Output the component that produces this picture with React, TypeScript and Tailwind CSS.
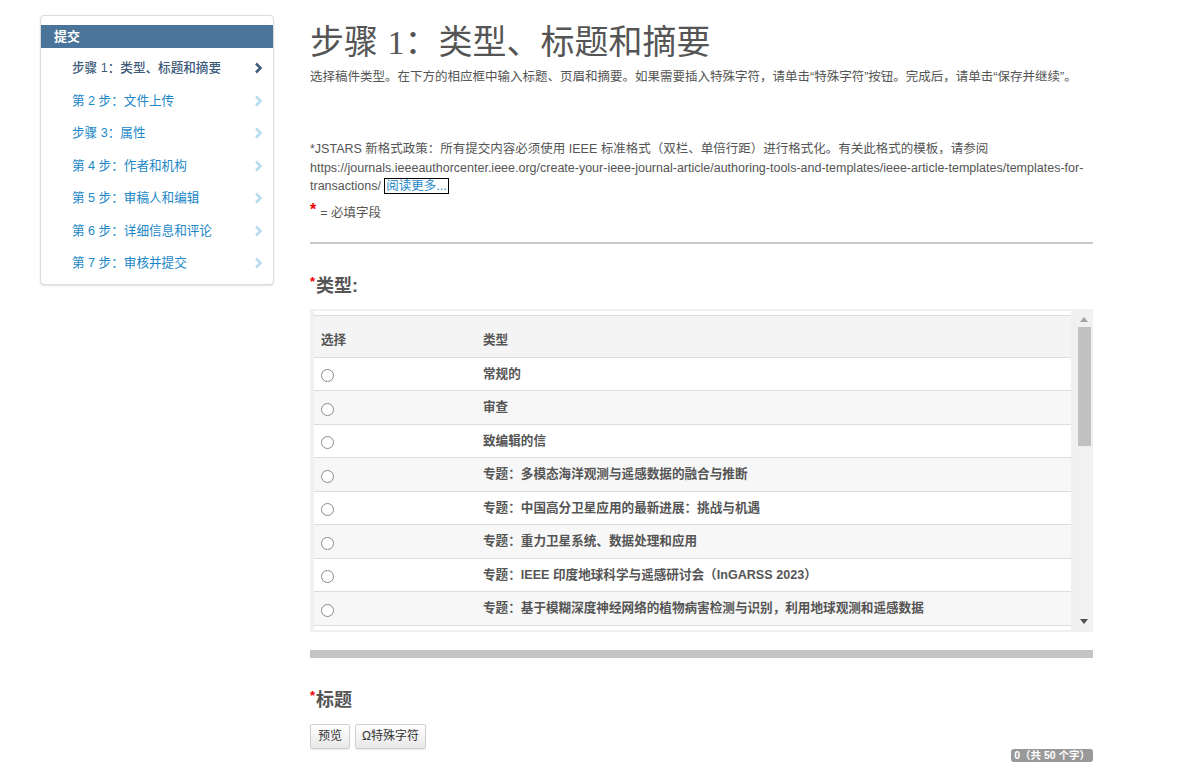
import React from "react";

const steps = [
  "步骤 1：类型、标题和摘要",
  "第 2 步：文件上传",
  "步骤 3：属性",
  "第 4 步：作者和机构",
  "第 5 步：审稿人和编辑",
  "第 6 步：详细信息和评论",
  "第 7 步：审核并提交",
];

const types = [
  "常规的",
  "审查",
  "致编辑的信",
  "专题：多模态海洋观测与遥感数据的融合与推断",
  "专题：中国高分卫星应用的最新进展：挑战与机遇",
  "专题：重力卫星系统、数据处理和应用",
  "专题：IEEE 印度地球科学与遥感研讨会（InGARSS 2023）",
  "专题：基于模糊深度神经网络的植物病害检测与识别，利用地球观测和遥感数据",
];

function Chevron({ active }: { active: boolean }) {
  return (
    <svg width="9" height="12" viewBox="0 0 9 12" className="shrink-0">
      <polyline
        points="2,1.5 6.5,6 2,10.5"
        fill="none"
        stroke={active ? "#3f5d7d" : "#b7dbef"}
        strokeWidth="2.6"
      />
    </svg>
  );
}

export default function App() {
  return (
    <div className="h-[762px] w-[1177px] overflow-hidden bg-white font-['Liberation_Sans','Noto_Sans_CJK_SC',sans-serif] text-[#555]">
      <div className="flex items-start">
        {/* Sidebar */}
        <div className="ml-[40px] mt-[15px] w-[234px] shrink-0 rounded-[4px] border border-[#dcdcdc] bg-white pb-[4px] pt-[9px] shadow-[0_1px_2px_rgba(0,0,0,0.12)]">
          <div className="flex h-[23px] items-center bg-[#4a7499] pl-[13px] text-[13px] font-bold text-white">
            提交
          </div>
          <div className="pt-[4px]">
            {steps.map((s, i) => (
              <div
                key={s}
                className="flex h-[32.5px] items-center justify-between pl-[31px] pr-[10px]"
              >
                <span
                  className={
                    i === 0
                      ? "text-[12.6px] font-medium leading-[18px] text-[#3d5b7b]"
                      : "text-[12.6px] leading-[18px] text-[#1b87c7]"
                  }
                >
                  {s}
                </span>
                <Chevron active={i === 0} />
              </div>
            ))}
          </div>
        </div>

        {/* Main */}
        <div className="ml-[36px] w-[783px] shrink-0 pt-[22px]">
          <h1 className="whitespace-nowrap text-[34px] font-normal leading-[40px] text-[#555]">
            步骤 <span className="font-['Liberation_Serif',serif]">1</span>：类型、标题和摘要
          </h1>
          <p className="mt-[5px] whitespace-nowrap text-[12.5px] leading-[18px]">
            选择稿件类型。在下方的相应框中输入标题、页眉和摘要。如果需要插入特殊字符，请单击“特殊字符”按钮。完成后，请单击“保存并继续”。
          </p>

          <div className="mt-[54px] text-[12.5px] leading-[18.5px]">
            <div className="whitespace-nowrap">
              *JSTARS 新格式政策：所有提交内容必须使用 IEEE 标准格式（双栏、单倍行距）进行格式化。有关此格式的模板，请参阅
            </div>
            <div className="whitespace-nowrap">
              https://journals.ieeeauthorcenter.ieee.org/create-your-ieee-journal-article/authoring-tools-and-templates/ieee-article-templates/templates-for-
            </div>
            <div className="whitespace-nowrap">
              transactions/{" "}
              <span className="border border-black px-[1px] text-[#1b87c7]">阅读更多...</span>
            </div>
          </div>

          <p className="mt-[8px] flex items-center text-[12.5px] leading-[18px]">
            <span className="relative top-[-3px] mr-[4px] text-[16px] font-bold leading-[10px] text-[#e00]">*</span>
            = 必填字段
          </p>

          <div className="mt-[20px] h-[2px] bg-[#c8c8c8]" />

          <h2 className="mt-[30px] flex items-start text-[18px] font-bold leading-[24px]">
            <span className="mr-[1px] text-[13px] leading-[16px] text-[#e00]">*</span>
            类型:
          </h2>

          {/* Table box */}
          <div className="mt-[11px] flex h-[323px] bg-[#f0f0f0] pt-[2px]">
            <div className="ml-[4px] h-[319px] w-[757px] overflow-hidden bg-white pt-[4px]">
              <div className="flex h-[43px] items-end border-y border-[#dddddd] bg-[#f4f4f4] pb-[8px] text-[12.6px] font-bold leading-[18px]">
                <div className="w-[169px] pl-[7px]">选择</div>
                <div>类型</div>
              </div>
              {types.map((t, i) => (
                <div
                  key={t}
                  className={
                    "flex h-[33.5px] items-center border-b border-[#dddddd] text-[12.6px] font-bold leading-[18px] " +
                    (i % 2 === 1 ? "bg-[#f7f7f7]" : "bg-white")
                  }
                >
                  <div className="flex w-[169px] pl-[7px]">
                    <span className="mt-[4px] block h-[13px] w-[13px] rounded-full border border-[#8a8a8a] bg-white" />
                  </div>
                  <div>{t}</div>
                </div>
              ))}
            </div>
            {/* fake scrollbar */}
            <div className="ml-[5px] flex h-[319px] w-[16px] flex-col items-center bg-[#f1f1f1]">
              <svg width="8" height="5" viewBox="0 0 8 5" className="mt-[6px]">
                <polygon points="0,5 4,0 8,5" fill="#a3a3a3" />
              </svg>
              <div className="mt-[5px] h-[119px] w-[13px] bg-[#c1c1c1]" />
              <div className="flex-1" />
              <svg width="8" height="5" viewBox="0 0 8 5" className="mb-[6px]">
                <polygon points="0,0 8,0 4,5" fill="#505050" />
              </svg>
            </div>
          </div>

          <div className="mt-[18px] h-[8px] bg-[#c4c4c4]" />

          <h2 className="mt-[30px] flex items-start text-[18px] font-bold leading-[24px]">
            <span className="mr-[1px] text-[13px] leading-[16px] text-[#e00]">*</span>
            标题
          </h2>

          <div className="mt-[12px] flex gap-[5px]">
            <button className="h-[25px] w-[40px] rounded-[2px] border border-[#cfcfcf] bg-gradient-to-b from-white to-[#e8e8e8] text-[12px] leading-[16px] text-[#333] shadow-[0_1px_1px_rgba(0,0,0,0.08)]">
              预览
            </button>
            <button className="h-[25px] w-[71px] rounded-[2px] border border-[#cfcfcf] bg-gradient-to-b from-white to-[#e8e8e8] text-[12px] leading-[16px] text-[#333] shadow-[0_1px_1px_rgba(0,0,0,0.08)]">
              Ω特殊字符
            </button>
          </div>

          <div className="flex justify-end">
            <span className="rounded-[3px] bg-[#999] px-[3px] text-[10.5px] font-bold leading-[13px] text-white">
              0（共 50 个字）
            </span>
          </div>
        </div>
      </div>
    </div>
  );
}
